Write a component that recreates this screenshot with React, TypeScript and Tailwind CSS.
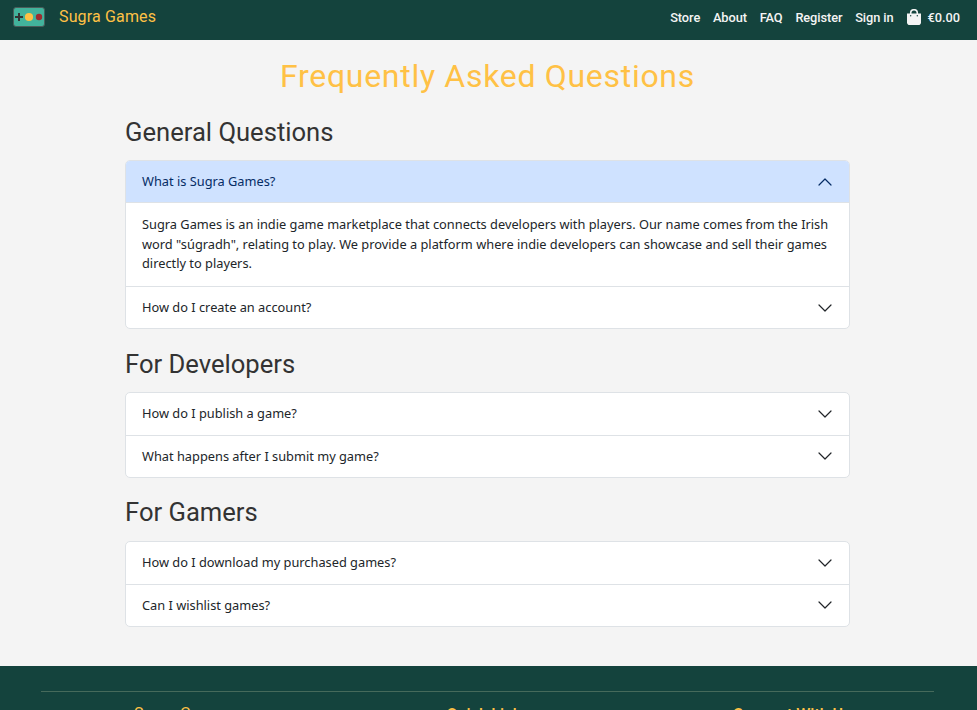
import React, { useState } from "react";

type Item = { question: string; answer?: string; height: string; chevron?: string };
type Section = { title: string; margin: string; gap: string; items: Item[] };

const sections: Section[] = [
  {
    title: "General Questions",
    margin: "mt-[18px]",
    gap: "mb-[11px]",
    items: [
      {
        question: "What is Sugra Games?",
        answer:
          'Sugra Games is an indie game marketplace that connects developers with players. Our name comes from the Irish word "súgradh", relating to play. We provide a platform where indie developers can showcase and sell their games directly to players.',
        height: "h-[41px]",
      },
      { question: "How do I create an account?", height: "h-[41px]" },
    ],
  },
  {
    title: "For Developers",
    margin: "mt-[18px]",
    gap: "mb-[11px]",
    items: [
      { question: "How do I publish a game?", height: "h-[42px]" },
      { question: "What happens after I submit my game?", height: "h-[41px]", chevron: "mb-px" },
    ],
  },
  {
    title: "For Gamers",
    margin: "mt-[17px]",
    gap: "mb-[12px]",
    items: [
      { question: "How do I download my purchased games?", height: "h-[42px]" },
      { question: "Can I wishlist games?", height: "h-[41px]", chevron: "mb-px" },
    ],
  },
];

function Logo() {
  return (
    <svg width="32" height="20" viewBox="0 0 32 20" className="mt-px">
      <rect x="0.5" y="0.5" width="31" height="19" rx="2.5" fill="#42b39c" stroke="#4b5c5a" />
      <path d="M2 10h8M6 6v8" stroke="#333" strokeWidth="2" />
      <circle cx="16" cy="10" r="4.1" fill="#ffc145" />
      <circle cx="26" cy="10" r="3.2" fill="#9e2b2f" />
    </svg>
  );
}

function Bag() {
  return (
    <svg width="14" height="16" viewBox="0 0 14 16" className="ml-[13px] -mt-px">
      <path d="M3.7 6V4a3.3 3.3 0 0 1 6.6 0v2" fill="none" stroke="#f4f4f4" strokeWidth="1.6" />
      <path d="M0 4.6h14V13.2a2.8 2.8 0 0 1-2.8 2.8H2.8A2.8 2.8 0 0 1 0 13.2Z" fill="#f4f4f4" />
      <circle cx="3.7" cy="6.8" r=".7" fill="#14433d" />
      <circle cx="10.3" cy="6.8" r=".7" fill="#14433d" />
    </svg>
  );
}

function Chevron({ open, className = "" }: { open: boolean; className?: string }) {
  return (
    <svg width="16" height="16" viewBox="0 0 16 16" className={`${className} ${open ? "rotate-180" : ""}`}>
      <path
        d="M2 5 8 11 14 5"
        fill="none"
        stroke={open ? "#052c65" : "#212529"}
        strokeWidth="1.2"
        strokeLinecap="round"
        strokeLinejoin="round"
      />
    </svg>
  );
}

function Accordion({ items }: { items: Item[] }) {
  const [open, setOpen] = useState(0);
  return (
    <div className="overflow-hidden rounded-[5px] border border-[#dee2e6] bg-white">
      {items.map((item, i) => {
        const expanded = open === i && !!item.answer;
        return (
          <div key={item.question} className={i > 0 ? "border-t border-[#dee2e6]" : ""}>
            <button
              onClick={() => setOpen(open === i ? -1 : i)}
              className={`flex w-full items-center justify-between px-4 text-left ${item.height} ${
                expanded ? "bg-[#cfe2ff] text-[#052c65]" : "text-[#212529]"
              }`}
            >
              <span>{item.question}</span>
              <Chevron open={expanded} className={item.chevron} />
            </button>
            {expanded && (
              <div className="h-[84px] border-t border-[#dee2e6] px-4 pt-[12px] leading-[19.5px] text-[#212529]">
                {item.answer}
              </div>
            )}
          </div>
        );
      })}
    </div>
  );
}

export default function App() {
  return (
    <div className="flex h-[710px] w-full flex-col overflow-hidden bg-[#f4f4f4] font-['Noto_Sans',sans-serif] text-[12.8px]">
      <header className="flex h-10 shrink-0 items-start justify-between bg-[#14433d] pl-[13px] pr-[17px] font-['Roboto',sans-serif]">
        <a className="flex items-center gap-[14px] pt-[6px]">
          <Logo />
          <span className="whitespace-nowrap text-[16px] leading-5 tracking-[0.15px] text-[#ffc145]">Sugra Games</span>
        </a>
        <nav className="flex items-center pt-[8px] font-medium leading-[19px] text-[#f4f4f4]">
          <div className="flex gap-[12.8px] tracking-[-0.08px]">
            <a>Store</a>
            <a>About</a>
            <a>FAQ</a>
            <a>Register</a>
            <a>Sign in</a>
          </div>
          <Bag />
          <span className="ml-[7px] tracking-[-0.05px]">€0.00</span>
        </nav>
      </header>
      <main className="ml-[125px] h-[626px] w-[725px] shrink-0 pt-[15px]">
        <h1 className="h-[42px] whitespace-nowrap text-center font-['Roboto',sans-serif] text-[32px] leading-[43px] tracking-[0.7px] text-[#ffc145]">
          Frequently Asked Questions
        </h1>
        {sections.map((s) => (
          <section key={s.title} className={s.margin}>
            <h2
              className={`${s.gap} h-[34px] font-['Roboto',sans-serif] text-[25.6px] leading-[34px] text-[#333]`}
            >
              {s.title}
            </h2>
            <Accordion items={s.items} />
          </section>
        ))}
      </main>
      <footer className="h-[44px] shrink-0 overflow-hidden bg-[#14433d] pt-[25px]">
        <div className="ml-[41px] mr-[43px] border-t border-[#466a5b]" />
        <div className="grid grid-cols-[306px_306px_302px] pl-[29px] pt-[13px] text-center font-['Roboto',sans-serif] text-[16px] font-medium leading-5 text-[#ffc145]">
          <h3 className="-mt-px pl-px font-normal tracking-[0.15px]">Sugra Games</h3>
          <h3>Quick Links</h3>
          <h3>Connect With Us</h3>
        </div>
      </footer>
    </div>
  );
}
